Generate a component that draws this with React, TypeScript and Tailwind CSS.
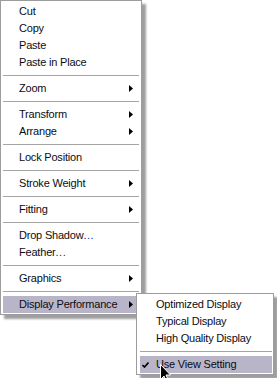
import React from 'react';

type Entry =
  | { kind: 'item'; label: string; sub?: boolean; active?: boolean; dots?: boolean; check?: boolean }
  | { kind: 'sep' };

const mainMenu: Entry[] = [
  { kind: 'item', label: 'Cut' },
  { kind: 'item', label: 'Copy' },
  { kind: 'item', label: 'Paste' },
  { kind: 'item', label: 'Paste in Place' },
  { kind: 'sep' },
  { kind: 'item', label: 'Zoom', sub: true },
  { kind: 'sep' },
  { kind: 'item', label: 'Transform', sub: true },
  { kind: 'item', label: 'Arrange', sub: true },
  { kind: 'sep' },
  { kind: 'item', label: 'Lock Position' },
  { kind: 'sep' },
  { kind: 'item', label: 'Stroke Weight', sub: true },
  { kind: 'sep' },
  { kind: 'item', label: 'Fitting', sub: true },
  { kind: 'sep' },
  { kind: 'item', label: 'Drop Shadow', dots: true },
  { kind: 'item', label: 'Feather', dots: true },
  { kind: 'sep' },
  { kind: 'item', label: 'Graphics', sub: true },
  { kind: 'sep' },
  { kind: 'item', label: 'Display Performance', sub: true, active: true },
];

const displayMenu: Entry[] = [
  { kind: 'item', label: 'Optimized Display' },
  { kind: 'item', label: 'Typical Display' },
  { kind: 'item', label: 'High Quality Display' },
  { kind: 'sep' },
  { kind: 'item', label: 'Use View Setting', active: true, check: true },
];

const Arrow = () => (
  <svg width="4" height="7" viewBox="0 0 4 7" className="shrink-0">
    <polygon points="0,0 4,3.5 0,7" fill="#000" />
  </svg>
);

const Check = () => (
  <svg width="7" height="6" viewBox="0 0 7 6" className="absolute left-[2px] top-[6px]">
    <path d="M0.5 3 L2.5 5 L6.5 0.5" stroke="#000" strokeWidth="1.6" fill="none" />
  </svg>
);

const MenuRows: React.FC<{ entries: Entry[] }> = ({ entries }) => (
  <>
    {entries.map((e, i) =>
      e.kind === 'sep' ? (
        <div key={i} className="h-[9px] flex items-center">
          <div className="w-full h-px bg-[#a5a5a5]" />
        </div>
      ) : (
        <div
          key={i}
          className={`relative h-[17px] flex items-center pl-[16px] pr-[6px] ${
            e.active ? 'bg-[#b9b5c9]' : ''
          }`}
        >
          {e.check ? <Check /> : null}
          <span className="flex-1 whitespace-nowrap leading-none tracking-[-0.2px]">
            {e.label}
            {e.dots ? <span className="text-[#1a2a8a] tracking-[0.5px]">...</span> : null}
          </span>
          {e.sub ? <Arrow /> : null}
        </div>
      )
    )}
  </>
);

export default function App() {
  return (
    <div
      className="relative w-[277px] h-[378px] bg-white overflow-hidden text-[11px] text-[#0c0c14]"
      style={{ fontFamily: '"Liberation Sans", Arial, sans-serif' }}
    >
      {/* main context menu */}
      <div className="w-[142px] border border-[#9c9c9c] bg-white px-[2px] pt-[2px] pb-[1px] shadow-[4px_4px_2px_rgba(0,0,0,0.38)]">
        <MenuRows entries={mainMenu} />
      </div>

      {/* Display Performance submenu */}
      <div className="absolute left-[136px] top-[293px] w-[138px] border border-[#9c9c9c] bg-white pl-[3px] pr-[1px] pt-[2px] pb-[1px] shadow-[4px_4px_2px_rgba(0,0,0,0.38)]">
        <MenuRows entries={displayMenu} />
      </div>

      {/* mouse pointer */}
      <svg
        width="12"
        height="19"
        viewBox="0 0 12 19"
        className="absolute left-[160px] top-[364px]"
      >
        <path
          d="M0.5 0.5 L0.5 15.5 L4 12 L6.5 17.5 L8.5 16.5 L6 11 L10.5 11 Z"
          fill="#000"
          stroke="#fff"
          strokeWidth="1"
        />
      </svg>
    </div>
  );
}
